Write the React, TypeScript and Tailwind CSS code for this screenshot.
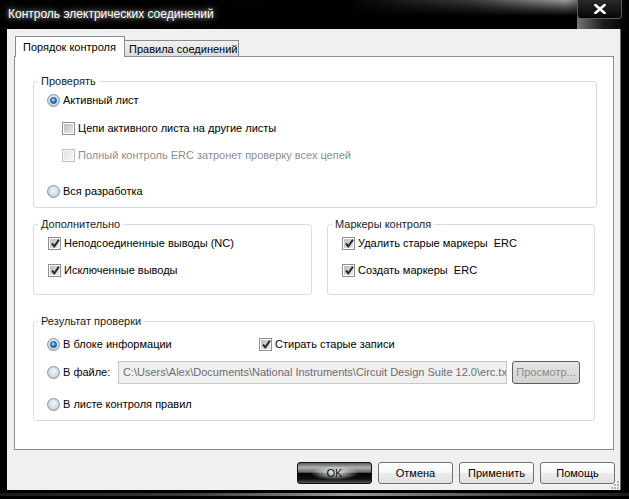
import React from 'react'

const font = "font-['Liberation_Sans',Arial,sans-serif]"

interface ICheck {
  checked?: boolean
  disabled?: boolean
}

const Check: React.FC<ICheck> = ({ checked, disabled }) => (
  <span
    className={`flex h-[13px] w-[13px] shrink-0 items-center justify-center border ${
      disabled ? 'border-[#c2c2c2] bg-[#f7f7f7]' : 'border-[#8e8f8f] bg-white'
    }`}
  >
    <span
      className={`relative flex h-[9px] w-[9px] items-center justify-center ${
        disabled
          ? 'bg-[linear-gradient(135deg,#e2e2e2,#f6f6f6)]'
          : 'bg-[linear-gradient(135deg,#bdbdbd,#e9e9e9)]'
      }`}
    >
      {checked && (
        <svg width="11" height="11" viewBox="0 0 11 11" className="absolute -top-[1px] left-[0px]">
          <path d="M2 5.5 L4.3 8.3 L9 1.6" fill="none" stroke="#2a2a2a" strokeWidth="2" />
        </svg>
      )}
    </span>
  </span>
)

const Radio: React.FC<{ checked?: boolean }> = ({ checked }) => (
  <span className="flex h-[13px] w-[13px] shrink-0 items-center justify-center rounded-full border border-[#8a939c] bg-[radial-gradient(circle_at_50%_40%,#f4f8fb_0%,#d6e2eb_45%,#a9bccb_100%)]">
    {checked && (
      <span className="h-[7px] w-[7px] rounded-full border border-[#17427a] bg-[radial-gradient(circle_at_40%_35%,#b8e4ff_0%,#3a92e4_45%,#0c4c97_100%)]" />
    )}
  </span>
)

interface IGroup {
  title: string
  className: string
  children: React.ReactNode
}

const Group: React.FC<IGroup> = ({ title, className, children }) => (
  <div className={`flex flex-col rounded-[3px] border border-[#d5dfe5] ${className}`}>
    <span className="-mt-[8px] ml-[4px] w-fit bg-white px-[3px] leading-[15px] text-[#1a1a1a]">{title}</span>
    {children}
  </div>
)

const Button: React.FC<{ children: React.ReactNode; primary?: boolean }> = ({ children, primary }) => (
  <button
    type="button"
    className={`flex h-[22px] w-[75px] items-center justify-center rounded-[3px] border ${
      primary
        ? 'border-[#111] bg-[radial-gradient(ellipse_24px_7px_at_50%_50%,rgba(255,255,255,0.95)_0%,rgba(255,255,255,0)_100%),linear-gradient(to_bottom,#5a5a5a_0%,#b0b0b0_22%,#6a6a6a_46%,#050505_52%,#101010_80%,#555_100%)] text-[#111]'
        : 'border-[#707070] bg-[linear-gradient(to_bottom,#ffffff_0%,#f8f8f8_50%,#ececec_51%,#e0e0e0_100%)] text-black'
    }`}
  >
    {children}
  </button>
)

export default function App() {
  return (
    <div className={`${font} relative flex h-[499px] w-[629px] flex-col overflow-hidden bg-black text-[11px] text-black`}>
      {/* title bar */}
      <div className="flex h-[29px] shrink-0 bg-[linear-gradient(to_right,#050505_0%,#000_55%,#3a3a3a_75%,#9a9a9a_90%,#1a1a1a_96%,#000_100%)]">
        <div className="flex h-[29px] flex-1 items-start bg-[linear-gradient(to_bottom,rgba(0,0,0,0)_0%,rgba(0,0,0,0.6)_30%,#000_55%)]">
          <span className="ml-[8px] mt-[7px] text-[12px] leading-[15px] text-white [text-shadow:0_0_4px_rgba(255,255,255,0.6),0_0_10px_rgba(200,200,200,0.6),0_0_18px_rgba(160,160,160,0.55)]">
            Контроль электрических соединений
          </span>
        </div>
        <div className="mr-[7px] flex h-[19px] w-[45px] items-center justify-center rounded-b-[4px] border border-t-0 border-[#5a5a5a] bg-[linear-gradient(to_bottom,#2a2a2a,#050505)]">
          <svg width="12" height="10" viewBox="0 0 12 10">
            <path d="M1.5 1 L10.5 9 M10.5 1 L1.5 9" stroke="#fff" strokeWidth="2.6" strokeLinecap="square" />
          </svg>
        </div>
      </div>

      {/* client area */}
      <div className="relative ml-[7px] flex h-[461px] w-[614px] shrink-0 flex-col border-r border-[#6a6a6a] bg-[#f0f0f0]">
        {/* tabs */}
        <div className="relative z-10 mt-[7px] flex h-[21px] items-end whitespace-nowrap pl-[8px]">
          <div className="relative z-10 flex h-[21px] w-[110px] items-start border border-b-0 border-[#898c95] bg-white pl-[7px] pt-[3px] leading-[15px]">
            Порядок контроля
          </div>
          <div className="-ml-[1px] mb-[1px] flex h-[16px] w-[115px] items-start border border-b-0 border-[#898c95] bg-[linear-gradient(to_bottom,#f2f2f2,#dcdcdc)] pl-[4px] pt-[1px] leading-[15px]">
            Правила соединений
          </div>
        </div>

        {/* tab panel */}
        <div className="-mt-[1px] ml-[7px] flex h-[394px] w-[600px] flex-col border border-[#898c95] bg-white">
          <Group title="Проверять" className="ml-[18px] mt-[24px] h-[127px] w-[564px]">
            <div className="mt-[3px] flex h-[17px] items-center gap-[3px] pl-[13px]">
              <Radio checked />
              <span>Активный лист</span>
            </div>
            <div className="mt-[11px] flex h-[17px] items-center gap-[3px] pl-[28px]">
              <Check />
              <span>Цепи активного листа на другие листы</span>
            </div>
            <div className="mt-[10px] flex h-[17px] items-center gap-[3px] pl-[28px]">
              <Check disabled />
              <span className="text-[#8d8d8d]">Полный контроль ERC затронет проверку всех цепей</span>
            </div>
            <div className="mt-[19px] flex h-[17px] items-center gap-[3px] pl-[13px]">
              <Radio />
              <span>Вся разработка</span>
            </div>
          </Group>

          <div className="ml-[18px] mt-[16px] flex gap-[15px]">
            <Group title="Дополнительно" className="h-[71px] w-[279px]">
              <div className="mt-[3px] flex h-[17px] items-center gap-[3px] pl-[14px]">
                <Check checked />
                <span>Неподсоединенные выводы (NC)</span>
              </div>
              <div className="mt-[10px] flex h-[17px] items-center gap-[3px] pl-[14px]">
                <Check checked />
                <span>Исключенные выводы</span>
              </div>
            </Group>
            <Group title="Маркеры контроля" className="h-[71px] w-[268px]">
              <div className="mt-[3px] flex h-[17px] items-center gap-[3px] pl-[14px]">
                <Check checked />
                <span>Удалить старые маркеры&nbsp; ERC</span>
              </div>
              <div className="mt-[10px] flex h-[17px] items-center gap-[3px] pl-[14px]">
                <Check checked />
                <span>Создать маркеры&nbsp; ERC</span>
              </div>
            </Group>
          </div>

          <Group title="Результат проверки" className="ml-[18px] mt-[26px] h-[100px] w-[562px]">
            <div className="mt-[7px] flex h-[17px] items-center pl-[13px]">
              <div className="flex w-[212px] items-center gap-[3px]">
                <Radio checked />
                <span>В блоке информации</span>
              </div>
              <div className="flex items-center gap-[3px]">
                <Check checked />
                <span>Стирать старые записи</span>
              </div>
            </div>
            <div className="mt-[8px] flex h-[23px] items-center pl-[13px]">
              <div className="flex w-[71px] items-center gap-[3px]">
                <Radio />
                <span>В файле:</span>
              </div>
              <div className="flex h-[23px] w-[389px] items-center overflow-hidden border border-[#c3c6cb] bg-[#f0f0f0] pl-[4px] text-[#6d6d6d]">
                <span className="overflow-hidden whitespace-nowrap">
                  C:\Users\Alex\Documents\National Instruments\Circuit Design Suite 12.0\erc.tx
                </span>
              </div>
              <div className="ml-[5px] flex h-[23px] w-[68px] items-center justify-center rounded-[3px] border border-[#5e5e5e] bg-[linear-gradient(to_bottom,#e6e6e6,#d2d2d2)] text-[#8a8a8a]">
                Просмотр...
              </div>
            </div>
            <div className="mt-[12px] flex h-[17px] items-center gap-[3px] pl-[13px]">
              <Radio />
              <span>В листе контроля правил</span>
            </div>
          </Group>
        </div>

        {/* dialog buttons */}
        <div className="mt-[12px] flex justify-end gap-[6px] pr-[5px]">
          <Button primary>OK</Button>
          <Button>Отмена</Button>
          <Button>Применить</Button>
          <Button>Помощь</Button>
        </div>

        {/* size grip */}
        <svg width="8" height="8" viewBox="0 0 8 8" className="absolute bottom-[1px] right-[1px]">
          <rect x="6" y="0" width="2" height="2" fill="#b5b5b5" />
          <rect x="3" y="3" width="2" height="2" fill="#b5b5b5" />
          <rect x="6" y="3" width="2" height="2" fill="#b5b5b5" />
          <rect x="0" y="6" width="2" height="2" fill="#b5b5b5" />
          <rect x="3" y="6" width="2" height="2" fill="#b5b5b5" />
          <rect x="6" y="6" width="2" height="2" fill="#b5b5b5" />
        </svg>
      </div>

      {/* bottom frame */}
      <div className="mt-[3px] h-[3px] bg-[linear-gradient(to_right,#1a1a1a_0%,#3a3a3a_30%,#9a9a9a_55%,#5a5a5a_75%,#1a1a1a_100%)]" />
    </div>
  )
}
